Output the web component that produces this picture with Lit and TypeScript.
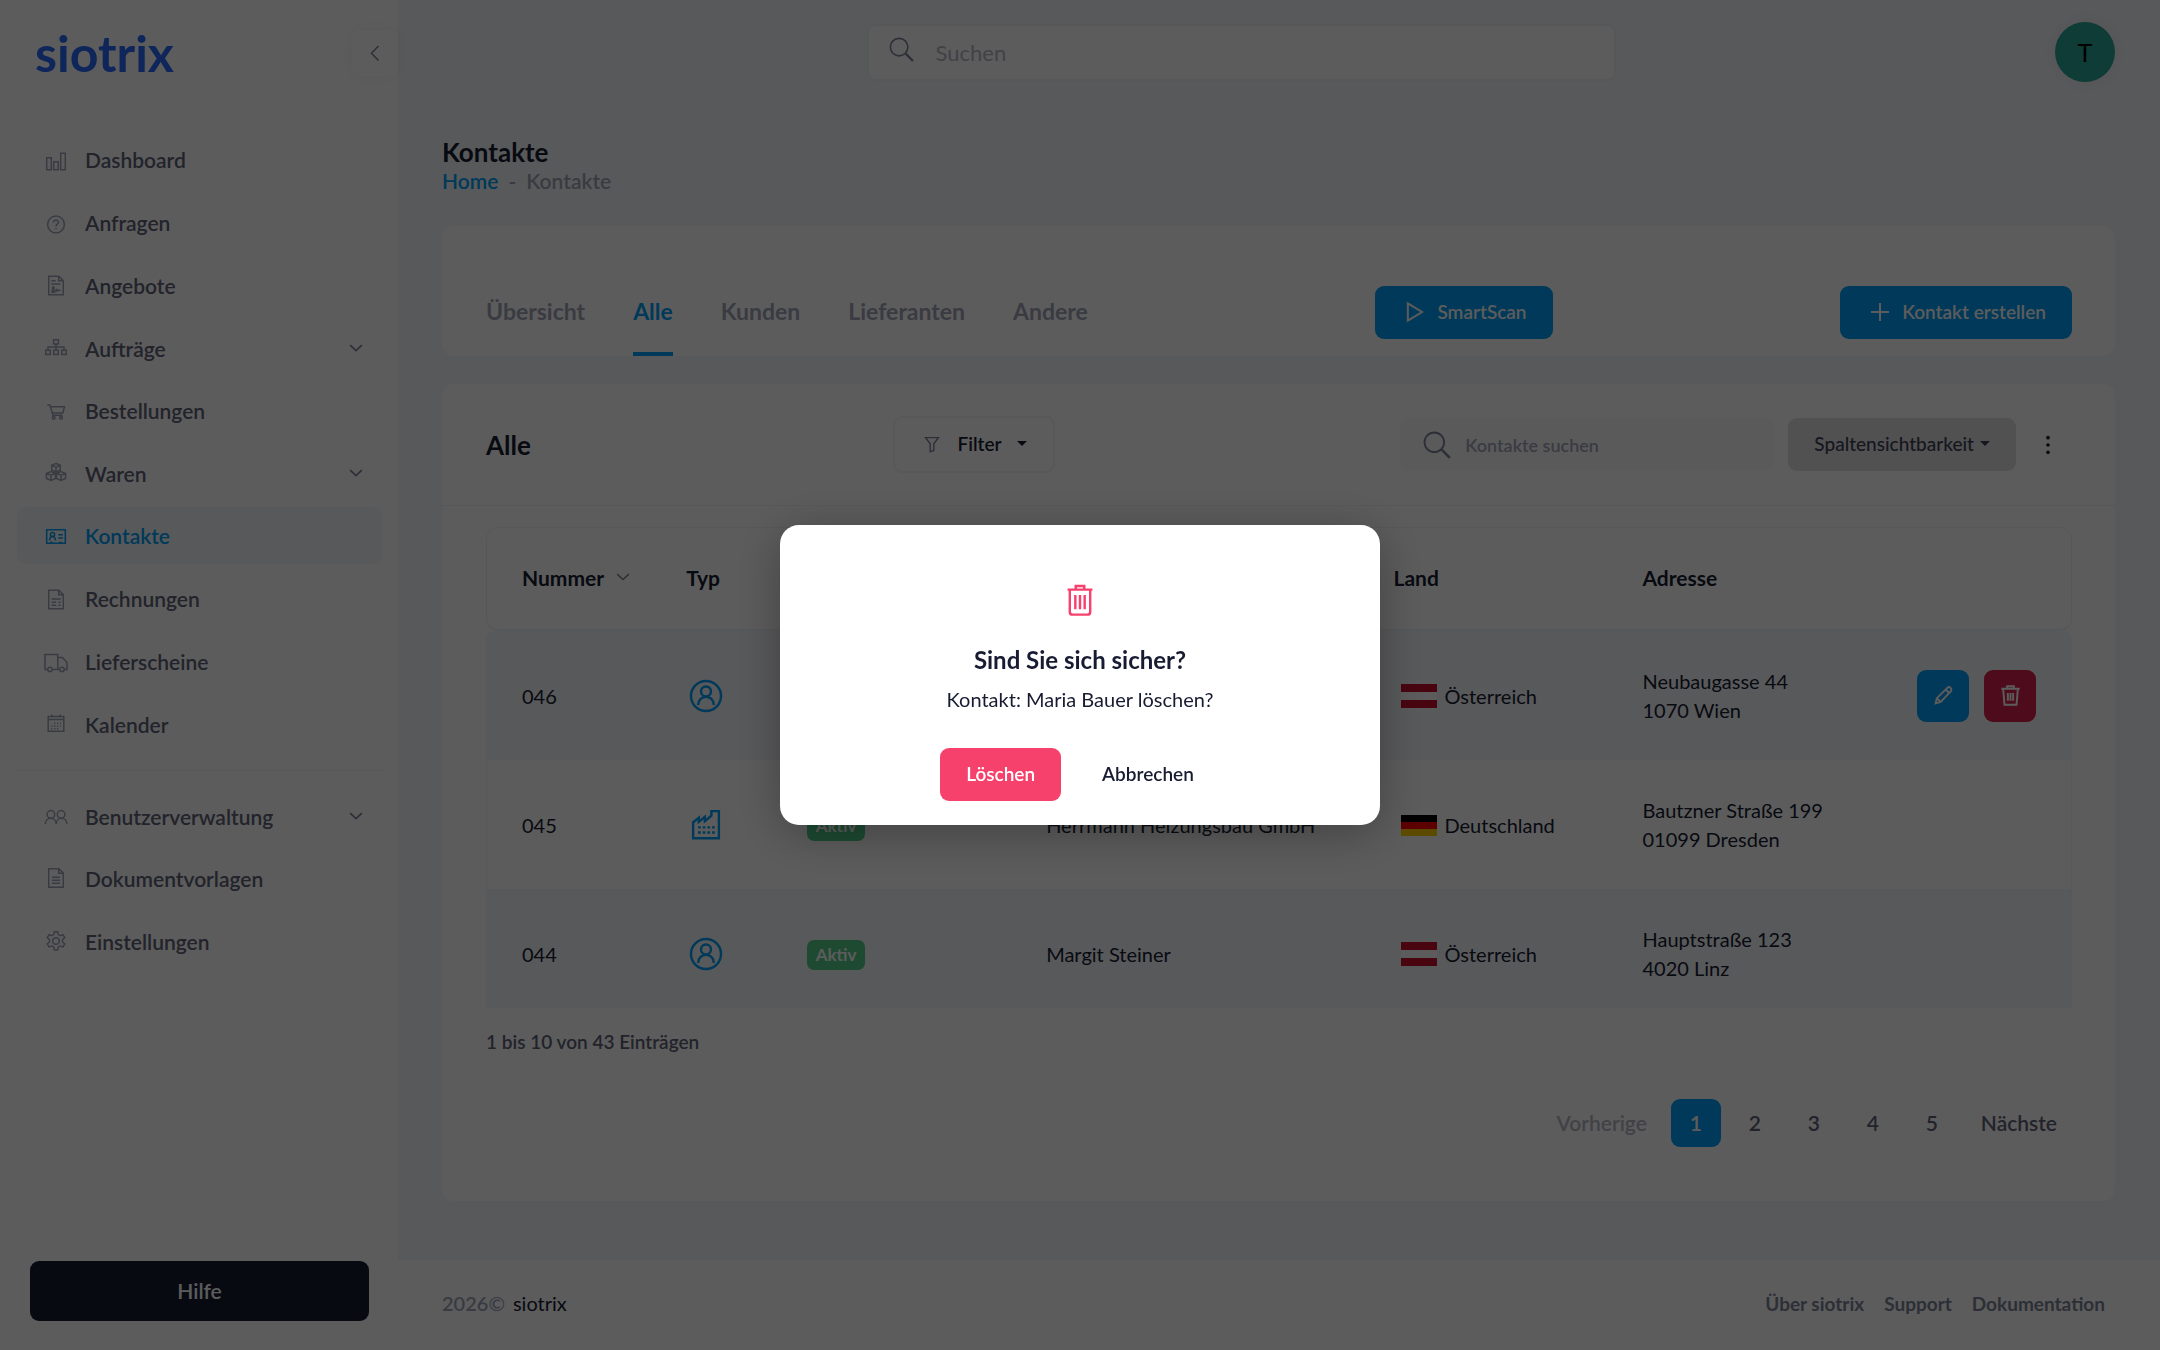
import { LitElement, html, svg, css, nothing, type TemplateResult } from 'lit';
import { customElement, property, state } from 'lit/decorators.js';
import { classMap } from 'lit/directives/class-map.js';

const shapes: Record<string, TemplateResult> = {
  dashboard: svg`<path d="M2.7 9.7h4.6v12.1H2.7zM9.7 13.7h4.6v8.1H9.7zM16.7 5.2h4.6v16.6h-4.6z"/>`,
  question: svg`<circle cx="12" cy="13.5" r="8.4"/><path d="M9.4 11.6c0-3.4 5.2-3.2 5.1-.1-.1 1.8-2.5 1.7-2.5 4" /><path d="M12 17v1.2"/>`,
  offer: svg`<path d="M4.7 2.2h10.2l4.4 4.4v14.2H4.7zM14.7 2.4v4.4h4.5M7.3 6.8h4.4M7.3 10h9.2"/><path d="M7.4 17.2c1.6-.3 3.2-2.2 2.6-3.9-.4-1-1.8-.4-1.5.8.4 1.6 1 3.4 2.4 3.2l1.4-1.6.8 1.6 1.2-1.2 2.4.4M7.3 18.2h4"/>`,
  sitemap: svg`<path d="M9.6 3.7h4.8v4.2H9.6zM1.7 14.3h4.6v4.3H1.7zM9.7 14.3h4.6v4.3H9.7zM17.7 14.3h4.6v4.3h-4.6zM12 8v6.2M4 14.2V11h16v3.2"/>`,
  cart: svg`<path d="M3.3 6h2.6l3 10.3h9.6M6.5 7.8h14L18.8 14H8.2"/><circle cx="9.7" cy="18.8" r="1.4"/><circle cx="17" cy="18.8" r="1.4"/>`,
  cubes: svg`<path d="M12 2.5l4.3 1.8v4.8L12 11l-4.3-1.9V4.3zM7.7 4.3L12 6.1l4.3-1.8M12 6.1V11M7 10.6l4.6 1.9v4.9L7 19.5l-4.6-2.1v-4.9zM2.4 12.5L7 14.3l4.6-1.8M7 14.3v5.2M17 10.6l4.6 1.9v4.9L17 19.5l-4.6-2.1v-4.9zM12.4 12.5l4.6 1.8 4.6-1.8M17 14.3v5.2"/>`,
  card: svg`<path d="M2.7 5.7h18.6v13.6H2.7z"/><circle cx="8.5" cy="10.5" r="2.1"/><path d="M5.6 16.5c.2-5.2 5.6-5.2 5.9 0M14.3 10.7h4.5M14.3 14.1h4.5M6 18.5h3M15 18.5h3"/>`,
  invoice: svg`<path d="M4.7 3.2h10.2l4.4 4.4v14.2H4.7zM14.7 3.4v4.4h4.5M7.5 12h9.2M7.5 15.3h4.7M14.3 15.3h2.4M7.5 18.3h4.7M14.3 18.3h2.4"/>`,
  truck: svg`<path d="M3.5 19.4H1V4.4h12.8v15H8.4M13.8 7.4h4.6l4.6 5.2v6.8h-2.4M13.8 19.4h1.8"/><circle cx="6" cy="19.4" r="2.2"/><circle cx="18" cy="19.4" r="2.2"/>`,
  calendar: svg`<path d="M4.2 3.4h15.6v14.8H4.2zM4.2 6.6h15.6M7.8 1.5v3M16.2 1.5v3"/><path d="M10 10.2h7M7 13h10M7 15.7h7.5" stroke-dasharray="1.4 1.6"/>`,
  users: svg`<circle cx="6.9" cy="10.4" r="3.8"/><circle cx="17.1" cy="10.4" r="3.8"/><path d="M1.2 20c.4-7.6 11-7.6 11 0 .2-7.6 10.4-7.6 10.7 0"/>`,
  doc: svg`<path d="M4.7 1.7h10.2l4.4 4.4v14.2H4.7zM14.7 1.9v4.4h4.5M8 10.2h8M8 13.2h8M8 16.2h8"/>`,
  gear: svg`<circle cx="12" cy="11" r="3.3"/><path d="M10.3 1.7h3.4l.6 2.9 1.9 1.1 2.8-1 1.7 3-2.2 1.9v2.4l2.2 2-1.7 2.9-2.8-.9-1.9 1.1-.6 2.9h-3.4l-.6-2.9-1.9-1.1-2.8.9L3.3 14l2.2-2V9.6L3.3 7.7l1.7-3 2.8 1 1.9-1.1z"/>`,
  down: svg`<path d="M5 8.5l7 6.5 7-6.5"/>`,
  left: svg`<path d="M15.5 5l-7 7.2 7 7.2"/>`,
  search: svg`<circle cx="9.7" cy="9.7" r="8.4"/><path d="M16 16l7 7" stroke-width="2.2"/>`,
  play: svg`<path d="M4.8 3.3v17.4L19 12z"/>`,
  plus: svg`<path d="M12 3v18M3 12h18"/>`,
  funnel: svg`<path d="M5 5h14l-5 6.7v7.3l-4 1.5v-8.800z"/>`,
  kebab: svg`<g fill="currentColor" stroke="none"><circle cx="12" cy="4" r="2"/><circle cx="12" cy="12" r="2"/><circle cx="12" cy="20" r="2"/></g>`,
  person: svg`<circle cx="12" cy="12" r="10.6"/><circle cx="12" cy="8.8" r="3.5"/><path d="M6.5 18.4c0-7.7 11-7.7 11 0"/>`,
  factory: svg`<path d="M2.9 21.4V10.1l4-3.2v3l4.3-3.6v3l4.6-3.9V2.2h5.3v19.2z"/><path d="M6.4 13.7h11.8M6.4 17.3h11.8" stroke-dasharray="1.9 1.4"/>`,
  pencil: svg`<path d="M3 21l1.4-6L16.8 2.9c2.3-1.6 5.2 1.2 3.9 3.9L8.8 19.3zM14.5 5.2l4 4M4.4 15l4.4 4.3"/>`,
  bin: svg`<path d="M1.5 4.3h21M8.2 4V1.5h7.6V4"/><path d="M3.6 4.5l1.5 18h13.8l1.5-18"/><path d="M9 9v9M12 9v9M15 9v9"/>`,
  trash: svg`<path d="M3.2 4.7h17.6M9 4.4V2.1h6v2.3M4.8 5v15.4c0 1.2.7 1.9 1.9 1.9h10.6c1.2 0 1.9-.7 1.9-1.9V5M8.7 8.5v10M12 8.5v10M15.3 8.5v10"/>`,
};

const icon = (name: string, cls = '') =>
  html`<svg class="icon ${cls}" viewBox="0 0 24 24" aria-hidden="true">${shapes[name]}</svg>`;

interface NavItem { icon: string; label: string; sub?: boolean; active?: boolean }
interface Contact { id: string; type: string; name: string; country: 'at' | 'de'; street: string; city: string }

const mainNav: NavItem[] = [
  { icon: 'dashboard', label: 'Dashboard' },
  { icon: 'question', label: 'Anfragen' },
  { icon: 'offer', label: 'Angebote' },
  { icon: 'sitemap', label: 'Aufträge', sub: true },
  { icon: 'cart', label: 'Bestellungen' },
  { icon: 'cubes', label: 'Waren', sub: true },
  { icon: 'card', label: 'Kontakte', active: true },
  { icon: 'invoice', label: 'Rechnungen' },
  { icon: 'truck', label: 'Lieferscheine' },
  { icon: 'calendar', label: 'Kalender' },
];
const adminNav: NavItem[] = [
  { icon: 'users', label: 'Benutzerverwaltung', sub: true },
  { icon: 'doc', label: 'Dokumentvorlagen' },
  { icon: 'gear', label: 'Einstellungen' },
];
const tabs = ['Übersicht', 'Alle', 'Kunden', 'Lieferanten', 'Andere'];
const contacts: Contact[] = [
  { id: '046', type: 'person', name: '', country: 'at', street: 'Neubaugasse 44', city: '1070 Wien' },
  { id: '045', type: 'factory', name: 'Herrmann Heizungsbau GmbH', country: 'de', street: 'Bautzner Straße 199', city: '01099 Dresden' },
  { id: '044', type: 'person', name: 'Margit Steiner', country: 'at', street: 'Hauptstraße 123', city: '4020 Linz' },
];
const countries = { at: 'Österreich', de: 'Deutschland' };

const base = css`
  * { box-sizing: border-box; }
  a { color: inherit; text-decoration: none; }
  button, input { font: inherit; color: inherit; margin: 0; border: 0; background: none; padding: 0; }
  button { cursor: pointer; }
  input { outline: 0; }
  h1, h2, p, ul { margin: 0; padding: 0; }
  ul { list-style: none; }
  .icon { display: block; flex: none; width: 24px; height: 24px; fill: none; stroke: currentColor; stroke-width: 1.5; }
  .btn {
    display: inline-flex; align-items: center; justify-content: center; height: 53px; padding: 0 26px 2px;
    border-radius: 9px; font-size: 19px; font-weight: 600; white-space: nowrap;
  }
`;

@customElement('side-nav')
export class SideNav extends LitElement {
  static styles = [base, css`
    :host { display: flex; flex-direction: column; background: #fff; }
    .top { display: flex; justify-content: space-between; align-items: center; height: 106px; padding-left: 35px; }
    .logo { color: #2c6afa; font-size: 50px; font-weight: 700; line-height: 60px; }
    .toggle {
      display: flex; align-items: center; justify-content: center; width: 46px; height: 46px; border-radius: 9px;
      background: #fff; color: #7e8299; box-shadow: 0 0 15px rgba(0, 0, 0, .05);
    }
    nav { flex: 1; padding: 25px 16px 0 17px; }
    ul { display: flex; flex-direction: column; gap: 6px; }
    .item {
      display: flex; align-items: center; gap: 17px; height: 57px; padding: 0 21px 0 27px; border-radius: 9px;
      color: #5e6278; font-size: 21px; font-weight: 600;
    }
    .item .icon { color: #a1a5b7; }
    .item .chevron { width: 20px; height: 20px; margin-left: auto; margin-right: -5px; color: #7e8299; stroke-width: 2; }
    .sub { height: 56px; }
    .item.active, .active .icon { color: #009ef7; }
    .active { background: #f4f6fa; }
    hr { height: 2px; margin: 16px 0 17px; border: 0; background: #f3f5f7; }
    .bottom { padding: 0 29px 29px 30px; }
    .help { width: 100%; height: 60px; background: #181c32; color: #fff; font-size: 21px; }
  `];

  private list(items: NavItem[]) {
    return html`<ul>${items.map((i) => html`
      <li><a href="#" class=${classMap({ item: true, sub: !!i.sub, active: !!i.active })}>
        ${icon(i.icon)}<span>${i.label}</span>${i.sub ? icon('down', 'chevron') : nothing}
      </a></li>`)}</ul>`;
  }

  render() {
    return html`
      <div class="top">
        <a class="logo" href="#">siotrix</a>
        <button class="toggle" aria-label="Menü einklappen">${icon('left')}</button>
      </div>
      <nav>${this.list(mainNav)}<hr>${this.list(adminNav)}</nav>
      <div class="bottom"><button class="btn help">Hilfe</button></div>`;
  }
}

@customElement('contact-table')
export class ContactTable extends LitElement {
  static styles = [base, css`
    :host { display: block; }
    table { width: 100%; table-layout: fixed; border-collapse: separate; border-spacing: 0; color: #181c32; }
    .c1 { width: 11.8%; } .c2 { width: 7.6%; } .c3 { width: 15.1%; } .c4 { width: 21.9%; }
    .c5 { width: 15.7%; } .c6 { width: 16%; }
    th {
      height: 104px; padding: 0 13px 3px; text-align: left; font-size: 21px; font-weight: 700;
      border: 0 solid #eff2f5; border-width: 1px 0 2px;
    }
    th:first-child { border-left-width: 1px; border-radius: 12px 0 0 12px; padding-left: 35px; }
    th:last-child { border-right-width: 1px; border-radius: 0 12px 12px 0; }
    .sort { display: inline-flex; align-items: center; gap: 9px; font-weight: 700; }
    .sort .icon { width: 20px; height: 20px; color: #7e8299; stroke-width: 1.8; }
    td { padding: 36px 13px 35px; font-size: 20px; line-height: 29px; vertical-align: middle; }
    td:first-child { padding-left: 35px; border-left: 1px solid #f1f4f7; }
    td:last-child { padding: 0 35px 0 0; border-right: 1px solid #f1f4f7; }
    tr:nth-child(odd) td { background: #f4f6fa; }
    tbody tr:first-child td:first-child { border-top-left-radius: 9px; }
    tbody tr:first-child td:last-child { border-top-right-radius: 9px; }
    tbody tr:last-child td { padding-bottom: 25px; }
    .type { width: 34px; height: 34px; margin-left: 3px; color: #009ef7; stroke-width: 1.7; }
    .badge {
      display: inline-block; padding: 0 9px; border-radius: 7px; background: #50cd89; color: #fff;
      font-size: 17px; font-weight: 700; line-height: 30px;
    }
    .country { display: flex; align-items: center; gap: 7px; padding-left: 8px; }
    .flag { display: flex; flex-direction: column; width: 36px; height: 24px; }
    .de { height: 21px; }
    .flag i { flex: 1; }
    .at i { background: #c8102e; } .at i:nth-child(2) { background: #fff; }
    .de i { background: #000; } .de i:nth-child(2) { background: #f00; } .de i:nth-child(3) { background: #ffce00; }
    .actions { display: flex; justify-content: flex-end; gap: 15px; }
    .act { width: 52px; height: 52px; padding: 0; background: #009ef7; color: #fff; }
    .act .icon { width: 21px; height: 21px; stroke-width: 2.2; }
    .del { background: #d9214e; }
  `];
  @property({ attribute: false }) rows: Contact[] = [];
  @property() hot = '';

  render() {
    return html`<table>
      <colgroup><col class="c1"><col class="c2"><col class="c3"><col class="c4"><col class="c5"><col class="c6"><col></colgroup>
      <thead><tr>
        <th><button class="sort">Nummer ${icon('down')}</button></th>
        <th>Typ</th><th>Status</th><th>Name</th><th>Land</th><th>Adresse</th><th aria-label="Aktionen"></th>
      </tr></thead>
      <tbody>${this.rows.map((r) => html`<tr>
        <td>${r.id}</td>
        <td>${icon(r.type, 'type')}</td>
        <td><span class="badge">Aktiv</span></td>
        <td>${r.name}</td>
        <td><div class="country"><span class="flag ${r.country}"><i></i><i></i><i></i></span>${countries[r.country]}</div></td>
        <td>${r.street}<br>${r.city}</td>
        <td>${r.id === this.hot ? html`<div class="actions">
          <button class="btn act" aria-label="Bearbeiten">${icon('pencil')}</button>
          <button class="btn act del" aria-label="Löschen">${icon('bin')}</button>
        </div>` : nothing}</td>
      </tr>`)}</tbody>
    </table>`;
  }
}

@customElement('confirm-dialog')
export class ConfirmDialog extends LitElement {
  static styles = [base, css`
    :host {
      position: fixed; inset: 0; z-index: 10; display: flex; align-items: center; justify-content: center;
      background: rgba(0, 0, 0, .64);
    }
    dialog {
      position: static; display: flex; flex-direction: column; align-items: center; width: 600px; max-width: 90%;
      margin: 0; padding: 58px 24px 24px; border: 0; border-radius: 19px; background: #fff; color: #181c32;
      box-shadow: 0 8px 48px rgba(0, 0, 0, .3);
    }
    .trash { width: 34px; height: 34px; color: #f6416c; stroke-width: 1.7; }
    h2 { margin-top: 25px; font-size: 24px; line-height: 36px; font-weight: 700; }
    p { margin-top: 6px; font-size: 20px; line-height: 30px; }
    .row { display: flex; gap: 15px; margin-top: 34px; }
    .yes { background: #f6416c; color: #fff; }
  `];
  render() {
    return html`<dialog open aria-labelledby="t">
      ${icon('trash', 'trash')}
      <h2 id="t">Sind Sie sich sicher?</h2>
      <p>Kontakt: Maria Bauer löschen?</p>
      <div class="row">
        <button class="btn yes" @click=${() => this.dispatchEvent(new Event('close'))}>Löschen</button>
        <button class="btn" @click=${() => this.dispatchEvent(new Event('close'))}>Abbrechen</button>
      </div>
    </dialog>`;
  }
}

@customElement('app-root')
export class AppRoot extends LitElement {
  static styles = [base, css`
    :host {
      display: grid; grid-template-columns: 398px minmax(0, 1fr); min-height: 100vh; background: #f4f6fa;
      color: #181c32; font-family: Lato, "Open Sans", sans-serif; font-size: 20px;
    }
    .main { display: flex; flex-direction: column; }
    .content { flex: 1; padding: 0 45px 58px 44px; }
    .head { display: flex; align-items: center; justify-content: space-between; height: 104px; }
    .field { display: flex; align-items: center; }
    .field input { flex: 1; min-width: 0; height: 100%; }
    .field input::placeholder { color: #a1a5b7; opacity: 1; }
    .global {
      width: 100%; max-width: 749px; height: 57px; gap: 22px; padding: 0 20px; font-size: 22px; background: #fff;
      border: 2px solid #eff2f5; border-radius: 9px;
    }
    .global input::placeholder { color: #b5b5c3; }
    .global .icon { width: 25px; height: 25px; margin-bottom: 6px; color: #7e8299; }
    .avatar {
      width: 60px; height: 60px; margin-left: 15px; border-radius: 50%; background: #2ca698; color: #000;
      font-size: 25px; box-shadow: 0 0 20px rgba(0, 0, 0, .05);
    }
    h1 { margin-top: 33px; font-size: 26px; line-height: 30px; font-weight: 700; }
    .crumbs { display: flex; gap: 10px; font-size: 21px; line-height: 28px; font-weight: 600; color: #a1a5b7; }
    .crumbs a { color: #009ef7; }
    .card { border-radius: 12px; background: #fff; }
    .bar { display: flex; justify-content: space-between; margin-top: 31px; padding: 44px 43px 0 44px; }
    .tabs { display: flex; gap: 48px; }
    .tab {
      display: flex; align-items: center; height: 86px; border-bottom: 4px solid transparent; color: #a1a5b7;
      font-size: 23px; font-weight: 700;
    }
    .on { color: #009ef7; border-bottom-color: #009ef7; }
    .primary { gap: 8px; margin-top: 16px; background: #009ef7; color: #fff; }
    .primary .icon { width: 28px; height: 24px; stroke-width: 2; }
    .list { margin-top: 28px; padding-bottom: 54px; }
    .tools {
      display: flex; align-items: center; justify-content: space-between; height: 122px; padding: 0 43px 0 44px;
      border-bottom: 1px solid #eff2f5;
    }
    h2 { margin-right: 16px; font-size: 26px; font-weight: 700; }
    .filter { height: 57px; gap: 15px; border: 2px solid #f1f3f6; }
    .filter .icon { width: 22px; height: 22px; color: #7e8299; }
    .caret { flex: none; border: 5px solid transparent; border-top-color: currentColor; border-bottom: 0; }
    .right { display: flex; align-items: center; }
    .find {
      width: 374px; height: 53px; gap: 14px; padding: 0 23px; border-radius: 9px; background: #f9f9f9;
      font-size: 18px; font-weight: 600;
    }
    .find .icon { width: 28px; height: 28px; color: #7e8299; stroke-width: 1.6; }
    .columns { gap: 6px; margin: 0 8px 0 14px; background: #dfe1e4; color: #3f4254; font-weight: 500; }
    .more { display: flex; align-items: center; justify-content: center; width: 48px; height: 53px; }
    .more .icon { width: 22px; height: 22px; }
    .body { padding: 21px 43px 0 44px; }
    .info { margin-top: 19px; color: #5e6278; font-size: 19px; line-height: 30px; font-weight: 600; }
    .pages { display: flex; justify-content: flex-end; gap: 9px; margin-top: 42px; }
    .page {
      min-width: 50px; height: 48px; padding: 0 15px 2px; border-radius: 9px; color: #5e6278; font-size: 21px;
      font-weight: 600;
    }
    .page:disabled { color: #b5b5c3; cursor: default; }
    .current { background: #009ef7; color: #fff; }
    footer {
      display: flex; align-items: center; justify-content: space-between; height: 90px; padding: 0 55px 4px 44px;
      background: #fff; font-size: 20px;
    }
    .year { margin-right: 8px; color: #a1a5b7; font-weight: 600; }
    .links { display: flex; gap: 20px; color: #7e8299; font-size: 19px; font-weight: 700; }
  `];
  @state() private tab = 'Alle';
  @state() private confirming = true;

  render() {
    return html`
      <side-nav></side-nav>
      <div class="main">
        <div class="content">
          <header class="head">
            <span></span>
            <label class="field global">${icon('search')}<input type="search" placeholder="Suchen" aria-label="Suchen"></label>
            <button class="avatar" aria-label="Benutzerkonto">T</button>
          </header>
          <h1>Kontakte</h1>
          <div class="crumbs"><a href="#">Home</a><span>-</span><span>Kontakte</span></div>

          <section class="card bar">
            <nav class="tabs">${tabs.map((t) => html`<a href="#" class=${classMap({ tab: true, on: t === this.tab })}
              @click=${(e: Event) => { e.preventDefault(); this.tab = t; }}>${t}</a>`)}</nav>
            <button class="btn primary">${icon('play')}SmartScan</button>
            <button class="btn primary">${icon('plus')}Kontakt erstellen</button>
          </section>

          <section class="card list">
            <div class="tools">
              <h2>Alle</h2>
              <button class="btn filter">${icon('funnel')}Filter<span class="caret"></span></button>
              <div class="right">
                <label class="field find">${icon('search')}<input type="search" placeholder="Kontakte suchen" aria-label="Kontakte suchen"></label>
                <button class="btn columns">Spaltensichtbarkeit<span class="caret"></span></button>
                <button class="more" aria-label="Mehr">${icon('kebab')}</button>
              </div>
            </div>
            <div class="body">
              <contact-table .rows=${contacts} hot="046"></contact-table>
              <p class="info">1 bis 10 von 43 Einträgen</p>
              <nav class="pages">
                <button class="page" disabled>Vorherige</button>
                ${[1, 2, 3, 4, 5].map((n) => html`<button class=${classMap({ page: true, current: n === 1 })}>${n}</button>`)}
                <button class="page">Nächste</button>
              </nav>
            </div>
          </section>
        </div>
        <footer>
          <div><span class="year">2026©</span><a href="#">siotrix</a></div>
          <nav class="links"><a href="#">Über siotrix</a><a href="#">Support</a><a href="#">Dokumentation</a></nav>
        </footer>
      </div>
      ${this.confirming ? html`<confirm-dialog @close=${() => { this.confirming = false; }}></confirm-dialog>` : nothing}`;
  }
}
